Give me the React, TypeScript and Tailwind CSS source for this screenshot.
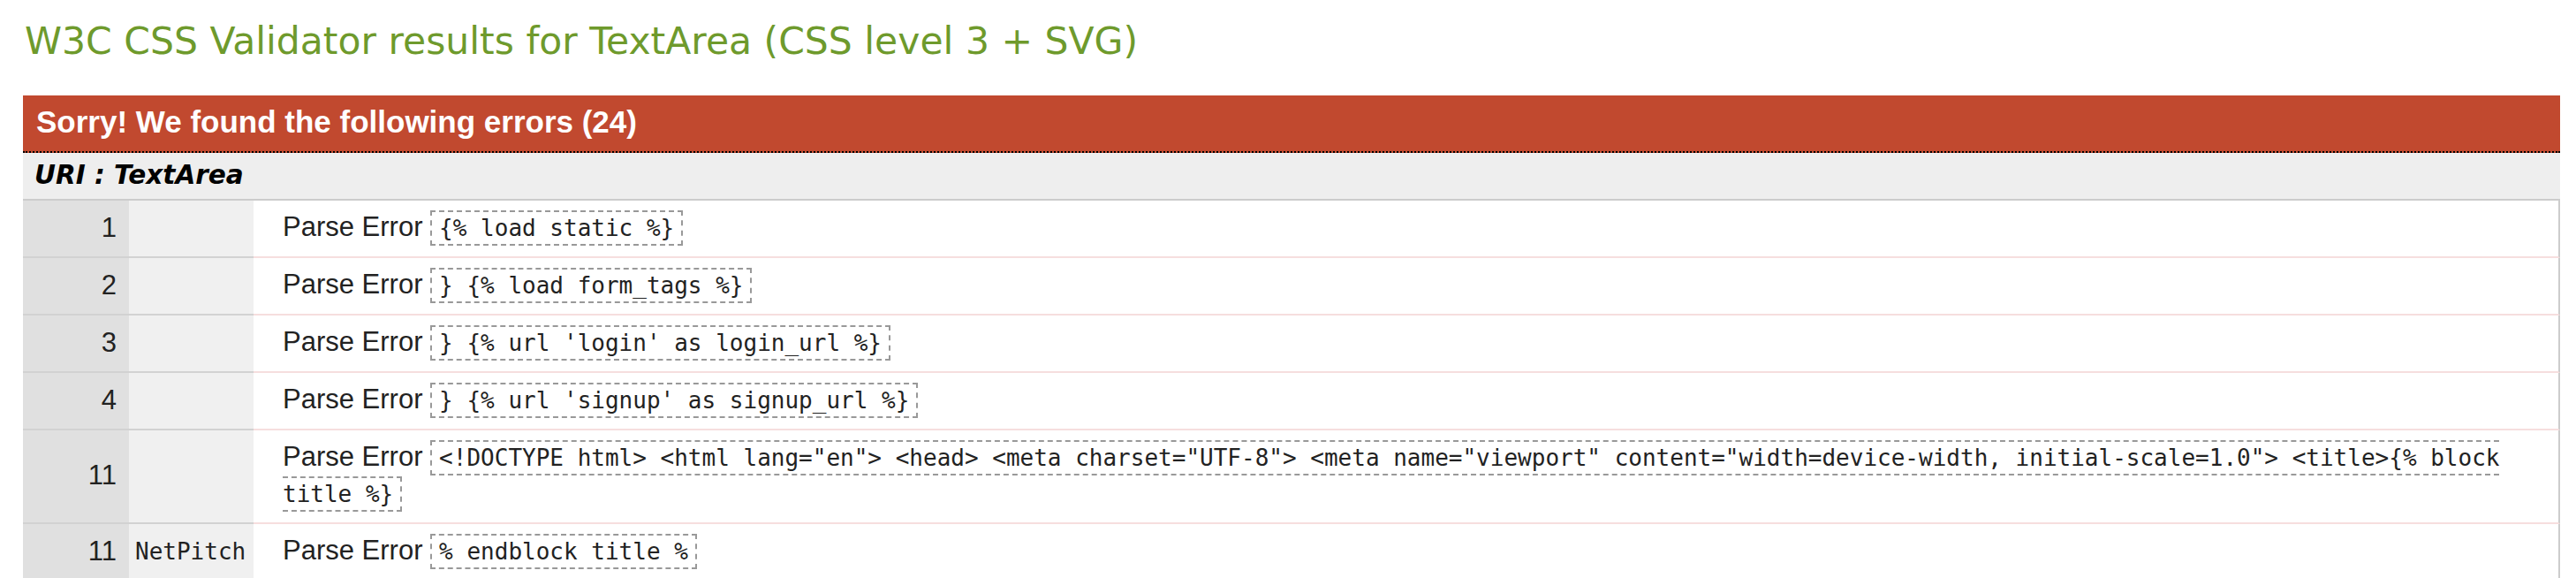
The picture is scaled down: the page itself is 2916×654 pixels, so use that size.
import React from 'react';

type Row = { line: string; context: string; code: string };

const rows: Row[] = [
  { line: '1', context: '', code: '{% load static %}' },
  { line: '2', context: '', code: '} {% load form_tags %}' },
  { line: '3', context: '', code: "} {% url 'login' as login_url %}" },
  { line: '4', context: '', code: "} {% url 'signup' as signup_url %}" },
  {
    line: '11',
    context: '',
    code: '<!DOCTYPE html> <html lang="en"> <head> <meta charset="UTF-8"> <meta name="viewport" content="width=device-width, initial-scale=1.0"> <title>{% block title %}',
  },
  { line: '11', context: 'NetPitch', code: '% endblock title %' },
];

const App = () => {
  return (
    <div className="bg-white min-h-[654px] pl-[26px] pr-[18px] font-['Liberation_Sans',Arial,sans-serif]">
      <h2 className="pt-[23px] pl-[2px] text-[42.5px] leading-[48px] text-[#6e9a2c] font-['DejaVu_Sans',Verdana,sans-serif] font-normal">
        W3C CSS Validator results for TextArea (CSS level 3 + SVG)
      </h2>

      <div className="mt-[37px]">
        <h3 className="bg-[#c1492f] text-white font-bold text-[35px] leading-[40px] pt-[10px] pb-[13px] px-[15px] border-b-2 border-dotted border-black">
          Sorry! We found the following errors (24)
        </h3>
        <div className="bg-[#eeeeee] border-b-2 border-[#cccccc] pt-[9px] pb-[11px] pl-[13px] text-[29.5px] leading-[32px] font-bold italic text-black font-['DejaVu_Sans',Verdana,sans-serif]">
          URI : TextArea
        </div>

        <table className="w-full table-fixed border-separate border-spacing-0 text-[31px] leading-[40px] text-[#222222]">
          <colgroup>
            <col className="w-[120px]" />
            <col className="w-[141px]" />
            <col />
          </colgroup>
          <tbody>
            {rows.map((r, i) => (
              <tr key={i}>
                <td className="bg-[#e0e0e0] text-right pr-[14px] pt-[10px] pb-[12px] align-middle border-b-2 border-[#d2d2d2]">
                  {r.line}
                </td>
                <td className="bg-[#f0f0f0] pl-[7px] pt-[10px] pb-[12px] align-middle border-b-2 border-[#d2d2d2] font-['DejaVu_Sans_Mono',monospace] text-[26px]">
                  {r.context}
                </td>
                <td className="bg-white pl-[33px] pr-[8px] pt-[10px] pb-[12px] align-middle border-b-2 border-b-[#f6dede] border-r-2 border-r-[#cccccc]">
                  Parse Error{' '}
                  <span className="font-['DejaVu_Sans_Mono',monospace] text-[26px] border-2 border-dashed border-[#999999] px-[8px] py-[3px]">
                    {r.code}
                  </span>
                </td>
              </tr>
            ))}
            <tr>
              <td className="bg-[#e0e0e0] h-[64px] border-b-2 border-[#d2d2d2]" />
              <td className="bg-[#f0f0f0] h-[64px] border-b-2 border-[#d2d2d2]" />
              <td className="bg-white h-[64px] border-b-2 border-b-[#f6dede] border-r-2 border-r-[#cccccc]" />
            </tr>
          </tbody>
        </table>
      </div>
    </div>
  );
};

export default App;
